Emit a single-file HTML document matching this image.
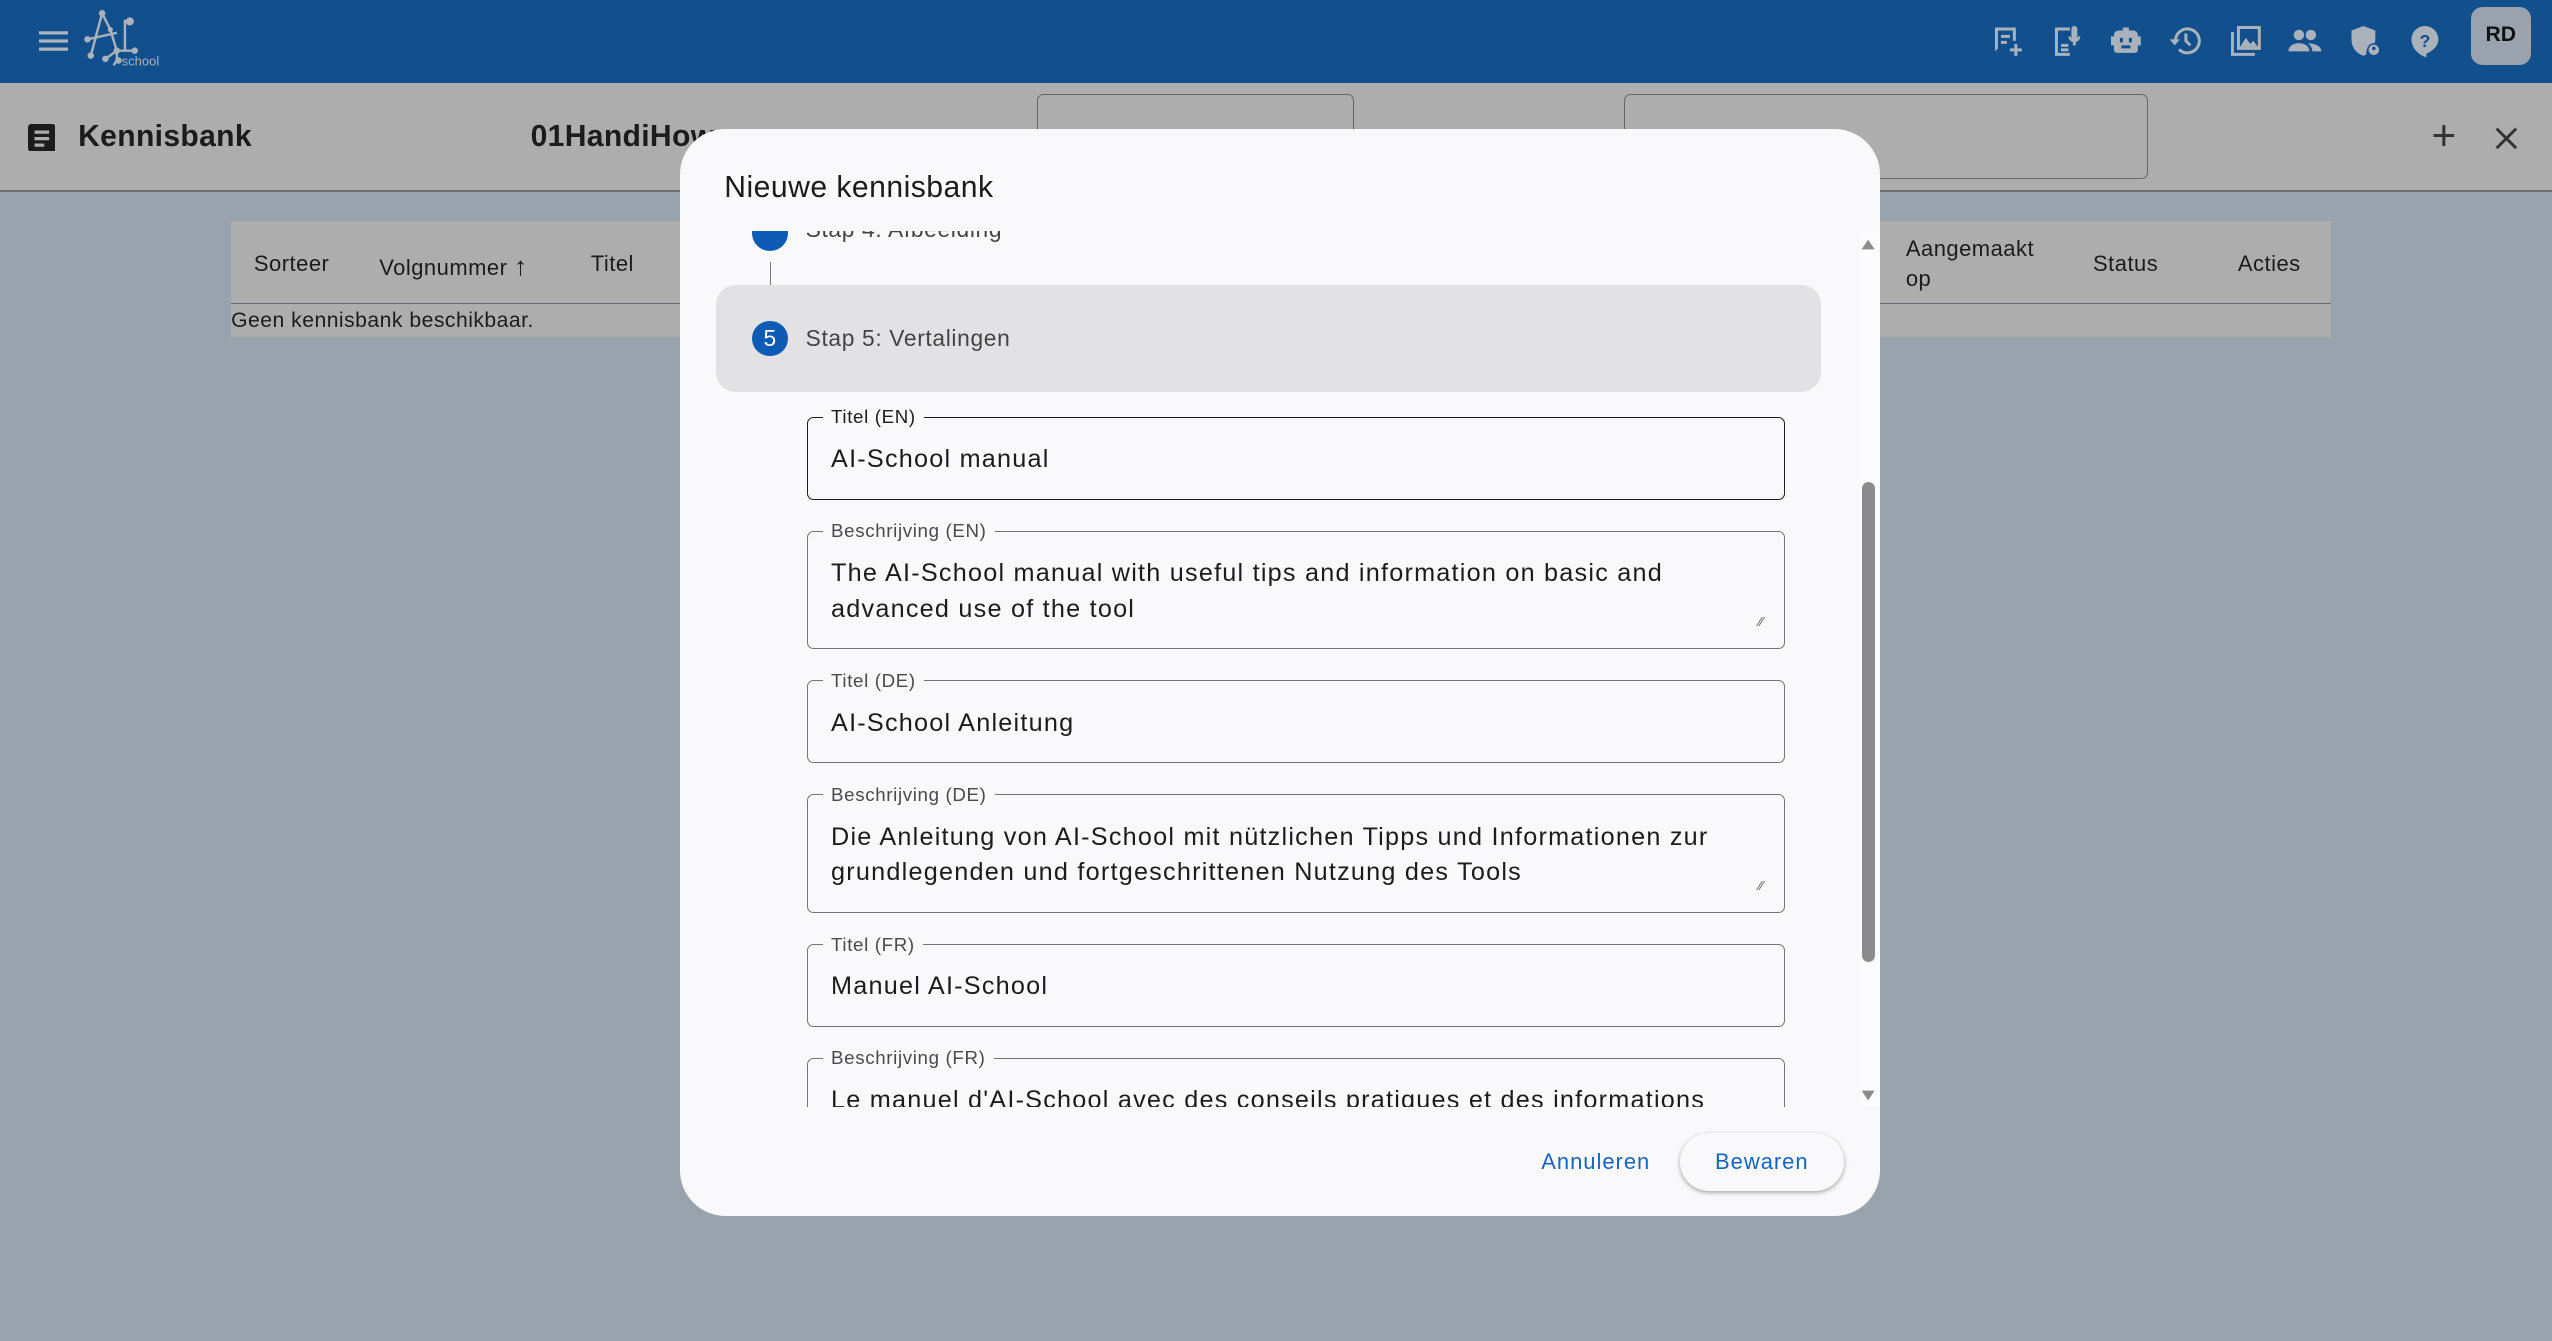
<!DOCTYPE html>
<html><head><meta charset="utf-8">
<style>
html,body{margin:0;padding:0;overflow:hidden;background:#98a3ad;}
#root{zoom:1.62755;width:1568px;height:824px;position:relative;font-family:"Liberation Sans",sans-serif;color:#1c1c1c;background:#98a3ad;overflow:hidden;}
.abs{position:absolute;}
.hdr{left:0;top:0;width:1568px;height:51px;background:#114f8d;}
.tb{left:0;top:51px;width:1568px;height:66px;background:#adadad;border-bottom:1.5px solid #6e6e70;}
.ico{position:absolute;top:14px;width:22px;height:22px;}
.table{left:142px;top:136px;width:1290px;height:71px;background:#adadad;}
.th{position:absolute;font-size:13.5px;color:#1c1c1c;letter-spacing:.3px;}
.modal{left:418px;top:79px;width:737px;height:668px;background:#f9f9fc;border-radius:28px;}
.fld{position:absolute;left:78px;width:601px;border:1px solid #757579;border-radius:4px;box-sizing:border-box;}
.fld .lb{position:absolute;left:9px;top:-7px;padding:0 5px;background:#f9f9fc;font-size:11.5px;color:#4a4a4e;letter-spacing:.4px;}
.fld .tx{position:absolute;left:14px;font-size:15.5px;color:#1c1c1c;letter-spacing:.75px;line-height:22px;}
</style></head><body><div id="root">
<div class="abs hdr">
  <svg class="abs" style="left:24px;top:17px" width="18" height="16" viewBox="0 0 18 16"><rect x="0" y="2" width="18" height="2" fill="#aab4bf"/><rect x="0" y="7" width="18" height="2" fill="#aab4bf"/><rect x="0" y="12" width="18" height="2" fill="#aab4bf"/></svg>
  <svg class="abs" style="left:50px;top:6px" width="54" height="38" viewBox="0 0 54 38"><g stroke="#a9b2bb" stroke-width="1.5" fill="none"><path d="M13 2 L6 28 M13 2 L18 12 L22 25 M4 18 L22 14 M22 25 L33 25 M22 25 L15 30 M22 25 L22 31 L20 34"/><path d="M27 6 L27 25"/></g><g fill="#a9b2bb"><circle cx="13" cy="2" r="2"/><circle cx="4" cy="18" r="2"/><circle cx="6" cy="28" r="2"/><circle cx="22" cy="25" r="2"/><circle cx="33" cy="25" r="2"/><circle cx="15" cy="30" r="2"/><circle cx="23" cy="31" r="2"/><circle cx="18" cy="12" r="1.6"/><circle cx="30" cy="7" r="2.5"/></g><text x="25" y="34" font-size="8" fill="#a9b2bb" font-family="Liberation Sans">school</text></svg>
  <svg class="ico" style="left:1222px" viewBox="0 0 24 24"><path fill="#a9b2bb" d="M4 3h14v9h-2V5H6v12l-2 2z M8 8h6v2H8z M8 12h4v2H8z M17 14h2v3h3v2h-3v3h-2v-3h-3v-2h3z"/></svg>
  <svg class="ico" style="left:1259px" viewBox="0 0 24 24"><path fill="#a9b2bb" d="M4 3h10v2H6v15h8v2H4z M8 14h5v2H8z M8 17h5v2H8z M17 2a2 2 0 0 1 2 2v6a2 2 0 0 1-4 0V4a2 2 0 0 1 2-2z M13 9h1.5a2.5 2.5 0 0 0 5 0H21a4 4 0 0 1-3 3.8V15h-2v-2.2A4 4 0 0 1 13 9z"/></svg>
  <svg class="ico" style="left:1295px" viewBox="0 0 24 24"><path fill="#a9b2bb" d="M10 3h4v2h3a3 3 0 0 1 3 3v1h2v6h-2v3a2 2 0 0 1-2 2H6a2 2 0 0 1-2-2v-3H2V9h2V8a3 3 0 0 1 3-3h3z M8 10v3h2v-3z M14 10v3h2v-3z M9 15v2h6v-2z"/></svg>
  <svg class="ico" style="left:1332px" viewBox="0 0 24 24"><path fill="none" stroke="#a9b2bb" stroke-width="2" d="M5 12a8 8 0 1 1 2.4 5.7 M12 7v5l3 3"/><path fill="#a9b2bb" d="M1 11h7l-3.5 4z"/></svg>
  <svg class="ico" style="left:1369px" viewBox="0 0 24 24"><path fill="#a9b2bb" d="M6 2h16v16H6z M2 6h2v14h14v2H2z"/><path fill="#114f8d" d="M8 4h12v12H8z"/><path fill="#a9b2bb" d="M8 16l4-6 3 4 2-2 3 4z"/></svg>
  <svg class="ico" style="left:1405px" viewBox="0 0 24 24"><g fill="#a9b2bb"><circle cx="8" cy="8" r="3.5"/><circle cx="16" cy="8" r="3.5"/><path d="M1 19c0-4 4-5.5 7-5.5s7 1.5 7 5.5z M14 13.6c3 0 9 1.2 9 5.4h-6c0-2-1-4-3-5.4z"/></g></svg>
  <svg class="ico" style="left:1442px" viewBox="0 0 24 24"><path fill="#a9b2bb" d="M11 2l8 3v6a9 9 0 0 1-1 4 5 5 0 0 0-5 6l-2 1C5 20 3 15 3 11V5z"/><circle cx="18" cy="18" r="4" fill="#a9b2bb" stroke="#114f8d" stroke-width="1"/><circle cx="18" cy="17" r="1.2" fill="#114f8d"/></svg>
  <svg class="ico" style="left:1479px" viewBox="0 0 24 24"><path fill="#a9b2bb" d="M12 2a9 9 0 0 1 9 9c0 4.5-4 8-8 9.5V23c-5-1.5-10-6-10-12a9 9 0 0 1 9-9z"/><text x="12" y="16" font-size="12" font-weight="bold" text-anchor="middle" fill="#114f8d" font-family="Liberation Sans">?</text></svg>
  <div class="abs" style="left:1518px;top:4px;width:37px;height:36px;background:#9aa3ad;border-radius:7px;font-weight:bold;font-size:13px;text-align:center;line-height:34px;color:#111">RD</div>
</div>
<div class="abs tb">
  <svg class="abs" style="left:17px;top:25px" width="17" height="17" viewBox="0 0 17 17"><rect width="17" height="17" rx="2" fill="#1c1c1c"/><rect x="4" y="4" width="9" height="2" fill="#adadad"/><rect x="4" y="8" width="9" height="2" fill="#adadad"/><rect x="4" y="12" width="6" height="2" fill="#adadad"/></svg>
  <div class="abs" style="left:48px;top:23px;font-size:18.5px;font-weight:bold;letter-spacing:.2px">Kennisbank</div>
  <div class="abs" style="left:326px;top:23px;font-size:18.5px;font-weight:bold;letter-spacing:.2px">01HandiHow</div>
  <div class="abs" style="left:637px;top:7px;width:195px;height:52px;border:1px solid #666;border-radius:4px;box-sizing:border-box"></div>
  <div class="abs" style="left:998px;top:7px;width:322px;height:52px;border:1px solid #666;border-radius:4px;box-sizing:border-box"></div>
  <div class="abs" style="left:1494px;top:18px;font-size:26px;color:#333;font-weight:300">+</div>
  <svg class="abs" style="left:1533px;top:27px" width="14" height="14" viewBox="0 0 14 14"><path d="M1 1L13 13M13 1L1 13" stroke="#333" stroke-width="1.8"/></svg>
</div>
<div class="abs table">
  <div class="th" style="left:14px;top:18px">Sorteer</div>
  <div class="th" style="left:91px;top:18px">Volgnummer <b style="font-weight:bold;font-size:16px">↑</b></div>
  <div class="th" style="left:221px;top:18px">Titel</div>
  <div class="th" style="left:1029px;top:8px;line-height:18px">Aangemaakt<br>op</div>
  <div class="th" style="left:1144px;top:18px">Status</div>
  <div class="th" style="left:1233px;top:18px">Acties</div>
  <div class="abs" style="left:0;top:50px;width:1290px;height:1px;background:#6a6a70"></div>
  <div class="th" style="left:0;top:54px;font-size:13px">Geen kennisbank beschikbaar.</div>
</div>
<div class="abs modal">
  <div class="abs" style="left:27px;top:26px;font-size:18.5px;font-weight:500;color:#1c1c1c;letter-spacing:.3px">Nieuwe kennisbank</div>
  <div class="abs" style="left:0;top:63px;width:737px;height:538px;overflow:hidden">
    <div class="abs" style="left:44px;top:-10px;width:22px;height:22px;border-radius:50%;background:#0d5bb5"></div>
    <div class="abs" style="left:77px;top:-9px;font-size:14px;color:#444;letter-spacing:.4px">Stap 4: Afbeelding</div>
    <div class="abs" style="left:55px;top:19px;width:1px;height:28px;background:#777"></div>
    <div class="abs" style="left:22px;top:33px;width:679px;height:66px;background:#e2e2e4;border-radius:12px"></div>
    <div class="abs" style="left:44px;top:55px;width:22px;height:22px;border-radius:50%;background:#0d5bb5;color:#fff;font-size:14px;text-align:center;line-height:22px">5</div>
    <div class="abs" style="left:77px;top:58px;font-size:14px;color:#444;letter-spacing:.4px">Stap 5: Vertalingen</div>
    <div class="fld" style="top:114px;height:51px;border-color:#1c1c1c"><span class="lb" style="color:#1c1c1c">Titel (EN)</span><span class="tx" style="top:15px">AI-School manual</span></div>
    <div class="fld" style="top:184px;height:73px"><span class="lb">Beschrijving (EN)</span><span class="tx" style="top:15px">The AI-School manual with useful tips and information on basic and<br>advanced use of the tool</span><span class="abs" style="right:13px;bottom:12px;font-size:8px;color:#555">⁄⁄</span></div>
    <div class="fld" style="top:276px;height:51px"><span class="lb">Titel (DE)</span><span class="tx" style="top:15px">AI-School Anleitung</span></div>
    <div class="fld" style="top:346px;height:73px"><span class="lb">Beschrijving (DE)</span><span class="tx" style="top:15px">Die Anleitung von AI-School mit nützlichen Tipps und Informationen zur<br>grundlegenden und fortgeschrittenen Nutzung des Tools</span><span class="abs" style="right:13px;bottom:12px;font-size:8px;color:#555">⁄⁄</span></div>
    <div class="fld" style="top:438px;height:51px"><span class="lb">Titel (FR)</span><span class="tx" style="top:15px">Manuel AI-School</span></div>
    <div class="fld" style="top:508px;height:73px"><span class="lb">Beschrijving (FR)</span><span class="tx" style="top:15px">Le manuel d'AI-School avec des conseils pratiques et des informations</span></div>
    <div class="abs" style="left:724px;top:0;width:13px;height:538px;background:#fbfbfd"></div>
    <div class="abs" style="left:726px;top:154px;width:8px;height:295px;background:#8b8b8d;border-radius:4px"></div>
  </div>
  <svg class="abs" style="left:725px;top:67px" width="10" height="8" viewBox="0 0 10 8"><path d="M5 1L9 7H1z" fill="#8b8b8d"/></svg>
  <svg class="abs" style="left:725px;top:590px" width="10" height="8" viewBox="0 0 10 8"><path d="M1 1H9L5 7z" fill="#8b8b8d"/></svg>
  <div class="abs" style="left:529px;top:627px;font-size:13.5px;color:#1565c0;letter-spacing:.6px">Annuleren</div>
  <div class="abs" style="left:614px;top:617px;width:101px;height:36px;border-radius:18px;background:#f9f9fc;box-shadow:0 1px 3px rgba(0,0,0,.35);font-size:13.5px;color:#1565c0;text-align:center;line-height:36px;letter-spacing:.6px">Bewaren</div>
</div>
</div></body></html>
